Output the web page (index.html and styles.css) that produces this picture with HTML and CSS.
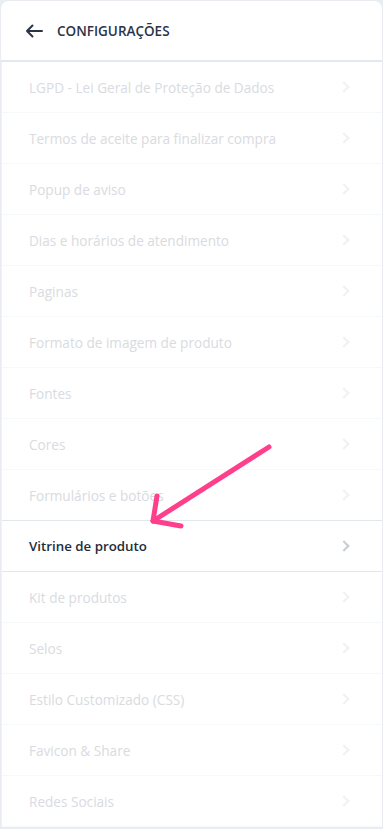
FILE: index.html
```html
<!DOCTYPE html>
<html lang="pt-BR">
<head>
<meta charset="utf-8">
<title>Configurações</title>
<link rel="stylesheet" href="styles.css">
</head>
<body>
<div class="panel">
  <header class="head">
    <svg class="back" width="18" height="14" viewBox="0 0 18 14"><path d="M17 7H2M7.5 1.5L2 7l5.5 5.5" fill="none" stroke="#2b3447" stroke-width="2" stroke-linecap="round" stroke-linejoin="round"/></svg>
    <span class="title">CONFIGURAÇÕES</span>
  </header>
  <ul class="list">
    <li class="row">LGPD - Lei Geral de Proteção de Dados<i class="chev"></i></li>
    <li class="row">Termos de aceite para finalizar compra<i class="chev"></i></li>
    <li class="row">Popup de aviso<i class="chev"></i></li>
    <li class="row">Dias e horários de atendimento<i class="chev"></i></li>
    <li class="row">Paginas<i class="chev"></i></li>
    <li class="row">Formato de imagem de produto<i class="chev"></i></li>
    <li class="row">Fontes<i class="chev"></i></li>
    <li class="row">Cores<i class="chev"></i></li>
    <li class="row">Formulários e botões<i class="chev"></i></li>
    <li class="row active">Vitrine de produto<i class="chev"></i></li>
    <li class="row">Kit de produtos<i class="chev"></i></li>
    <li class="row">Selos<i class="chev"></i></li>
    <li class="row">Estilo Customizado (CSS)<i class="chev"></i></li>
    <li class="row">Favicon &amp; Share<i class="chev"></i></li>
    <li class="row">Redes Sociais<i class="chev"></i></li>
  </ul>
  <svg class="pointer" width="130" height="90" viewBox="0 0 130 90"><g fill="none" stroke="#ff3f8c" stroke-width="5" stroke-linecap="round" stroke-linejoin="round"><path d="M124 6L8 80"/><path d="M12 55L8 80L36 85"/></g></svg>
</div>
</body>
</html>
```
FILE: styles.css
```css
html, body { margin: 0; padding: 0; }
body {
  background: #e9edf1;
  font-family: "Open Sans", "Noto Sans", sans-serif;
  width: 383px;
  height: 829px;
  overflow: hidden;
}
.panel {
  position: relative;
  margin: 1px 1px 0 1px;
  background: #fff;
  border-radius: 8px 8px 0 0;
  height: 826px;
}
.head {
  height: 59px;
  display: flex;
  align-items: center;
  padding-left: 24px;
  gap: 14px;
  border-bottom: 2px solid #e3e8ee;
}
.back { display: block; }
.title {
  font-size: 13.5px;
  font-weight: 600;
  color: #2b3447;
}
.list {
  list-style: none;
  margin: 0;
  padding: 0;
  border-left: 1px solid #eef1f4;
}
.row {
  height: 50px;
  display: flex;
  align-items: center;
  justify-content: space-between;
  padding: 0 34px 0 27px;
  font-size: 13.6px;
  color: #d9dbe0;
  border-bottom: 1px solid #f7f8f9;
}
.row.active {
  color: #242c3c;
  font-weight: 600;
  font-size: 13.3px;
  border-top: 1px solid #e2e7ec;
  border-bottom: 1px solid #e2e7ec;
  margin-top: -1px;
}
.chev {
  width: 6px;
  height: 6px;
  border-right: 2px solid #f0f1f3;
  border-top: 2px solid #f0f1f3;
  transform: rotate(45deg);
}
.row.active .chev { border-color: #c9ced5; }
.pointer {
  position: absolute;
  left: 144px;
  top: 440px;
}
```
